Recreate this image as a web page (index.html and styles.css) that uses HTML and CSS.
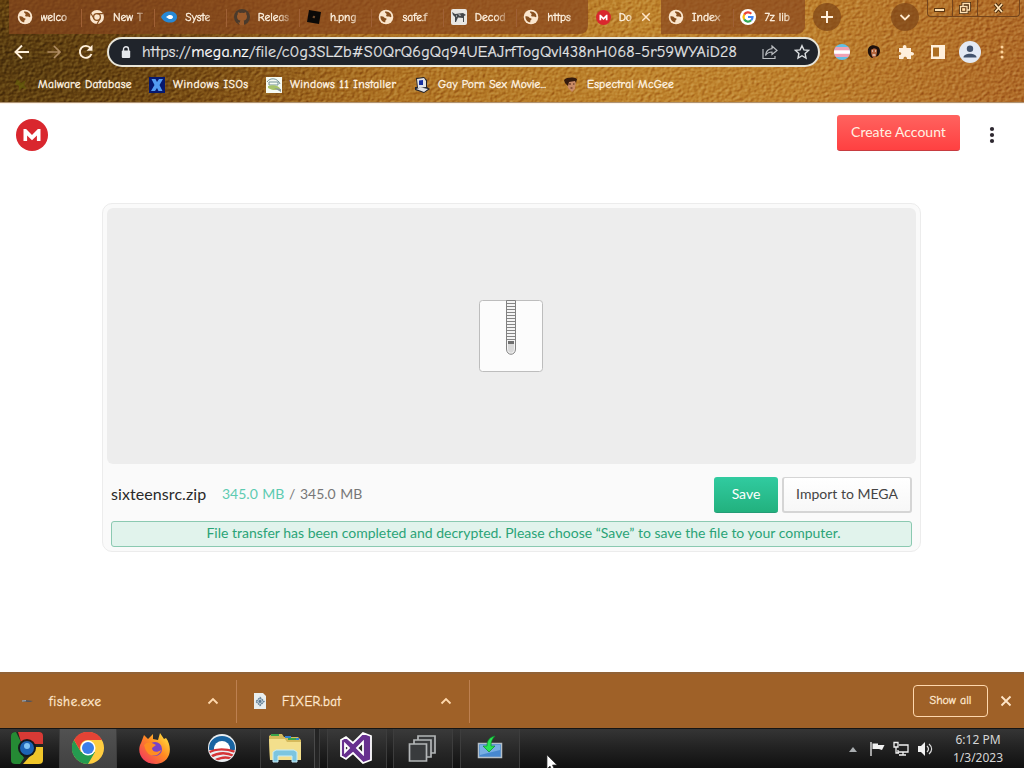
FILE: index.html
```html
<!DOCTYPE html>
<html lang="en">
<head>
  <meta charset="utf-8" />
  <title>MEGA - sixteensrc.zip</title>
  <link rel="stylesheet" href="styles.css">
</head>
<body>

  <!-- Shared icons -->
  <svg class="defs" width="0" height="0">
    <symbol id="globe" viewBox="0 0 16 16">
      <circle cx="8" cy="8" r="7.3" fill="#fbe6cd"/>
      <path d="M2.4 7.2c1.8 0 3 .2 3.8 1.2.9 1 2.4.4 2.4 1.6 0 1-1.300 1.100-1.300 2.100v1.200C4.300 13 2.300 10.500 2.400 7.200zM7 2.600c1.800-.5 4.200.3 5.400 2 .8 1.200 1 2.200.9 3.400-.9.500-1.500-.4-2.400-.5-1-.2-1.900.3-2.600-.5-.6-.8.600-1.300.3-2C8.300 4.200 6.700 4.100 7 2.600z" fill="#88501f"/>
    </symbol>
    <symbol id="up" viewBox="0 0 12 12"><path d="M1.500 8.500L6 4l4.500 4.500" fill="none" stroke="#ffd9ae" stroke-width="1.800"/></symbol>
    <symbol id="close" viewBox="0 0 12 12"><path d="M1.500 1.500l9 9M10.500 1.500l-9 9" fill="none" stroke="#ffe6c8" stroke-width="1.800"/></symbol>
    <symbol id="mega" viewBox="0 0 32 32">
      <circle cx="16" cy="16" r="16" fill="#d9272e"/>
      <path d="M7.500 22V10h2.600l5.900 5.900 5.900-5.900h2.600v12h-3.600v-5.600L16 21.200l-4.900-4.800V22z" fill="#fff"/>
    </symbol>
  </svg>

  <div class="browser">
    <div class="tabs">
      <div class="tab"><svg width="16" height="16"><use href="#globe"/></svg><span>welco</span></div>
      <div class="tab"><svg width="16" height="16" viewBox="0 0 16 16"><circle cx="8" cy="8" r="7" fill="#fbe6cd"/><circle cx="8" cy="8" r="3.400" fill="none" stroke="#88501f" stroke-width="1.300"/><path d="M8 4.600h6.200M5 9.700L2 4.500M11 9.700L8 15" stroke="#88501f" stroke-width="1.200"/></svg><span>New T</span></div>
      <div class="tab"><svg width="16" height="16" viewBox="0 0 16 16"><path d="M0 8c2-4 5-5.500 9-5.500 4 0 7 2 7 5.500s-3 5.500-7 5.500S2 12 0 8z" fill="#2789d6"/><path d="M5 8l3-2c3-.5 4 1 4 2s-1 2.500-4 2z" fill="#fff"/></svg><span>Syste</span></div>
      <div class="tab"><svg width="16" height="16" viewBox="0 0 16 16"><circle cx="8" cy="8" r="8" fill="#4a3a2c"/><path d="M6 16v-2.500c-2 .4-2.500-1-3-1.500M10 16v-3c0-.7 0-1-.5-1.500 2-.3 3.500-1 3.500-4 0-1-.3-1.700-.8-2.300.2-.6.100-1.400-.2-2-.8 0-1.500.4-2 .8a7 7 0 0 0-4 0c-.5-.4-1.200-.8-2-.8-.3.600-.4 1.400-.2 2C3.300 5.800 3 6.500 3 7.500c0 3 1.500 3.700 3.500 4-.5.500-.5 1-.5 1.500V16z" fill="#9a5a2a"/></svg><span>Releas</span></div>
      <div class="tab"><svg width="16" height="16" viewBox="0 0 16 16"><path d="M3 1l12 2-2 12L1 13z" fill="#0b0907"/><path d="M7 6.800l2.200.3-.4 2.200-2.200-.3z" fill="#6d4a2c"/></svg><span>h.png</span></div>
      <div class="tab"><svg width="16" height="16"><use href="#globe"/></svg><span>safe.f</span></div>
      <div class="tab"><svg width="16" height="16" viewBox="0 0 16 16"><rect width="16" height="16" rx="2" fill="#e9e7e3"/><path d="M1 3l3 2 8-1 3 2-2 1v6h-1V9l-5-.5L5 13H4V8L2 6z" fill="#45484b"/><path d="M7 5l3 1-1 1zM10 2h4v1zM5 6l1 1-1 1z" fill="#eee"/></svg><span>Decod</span></div>
      <div class="tab last"><svg width="16" height="16"><use href="#globe"/></svg><span>https</span></div>
      <div class="tab active"><svg width="15" height="15"><use href="#mega"/></svg><span>Do</span><svg class="x" width="10" height="10"><use href="#close"/></svg></div>
      <div class="tab"><svg width="16" height="16"><use href="#globe"/></svg><span>Index</span></div>
      <div class="tab last"><svg width="16" height="16" viewBox="0 0 16 16"><circle cx="8" cy="8" r="8" fill="#fff"/><g fill="none" stroke-width="2.200"><path d="M4.200 5.600A4.500 4.500 0 0 1 11.300 4.700" stroke="#ea4335"/><path d="M4.200 10.400a4.800 4.800 0 0 1 0-4.800" stroke="#fbbc05"/><path d="M11.200 11.300a4.500 4.500 0 0 1-7-.9" stroke="#34a853"/><path d="M8 8h4.500c0 1.500-.5 2.500-1.300 3.300" stroke="#4285f4"/></g></svg><span>7z lib</span></div>
      <div class="round plus"><svg width="14" height="14" viewBox="0 0 14 14"><path d="M7 1v12M1 7h12" stroke="#fff0dc" stroke-width="2"/></svg></div>
      <div class="round search"><svg width="12" height="12" viewBox="0 0 12 12"><path d="M1.500 4L6 8.500 10.500 4" fill="none" stroke="#ffe9cd" stroke-width="1.800"/></svg></div>
      <div class="controls">
        <div><svg class="min" width="12" height="12" viewBox="0 0 12 12"><rect x=".5" y="6.500" width="10" height="3" fill="#ffe2b5" stroke="#5a3510"/></svg></div>
        <div><svg width="12" height="12" viewBox="0 0 12 12"><g fill="none" stroke="#4d2d0c" stroke-width="3"><path d="M4 4V1.500h6.500V8H8"/><path d="M1.500 4.500H8V10.500H1.500z"/></g><g fill="none" stroke="#ffe2b5" stroke-width="1.300"><path d="M4 4V1.500h6.500V8H8"/><path d="M1.500 4.500H8V10.500H1.500zM4 7h1.500v1H4z"/></g></svg></div>
        <div><svg width="12" height="12" viewBox="0 0 12 12"><path d="M2 2l7 8M9 2l-7 8" stroke="#4d2d0c" stroke-width="3.800"/><path d="M2 2l7 8M9 2l-7 8" stroke="#ffe2b5" stroke-width="1.800"/></svg></div>
      </div>
    </div>

    <div class="toolbar">
      <svg width="16" height="16" viewBox="0 0 16 16"><path d="M15 8H2M8 1.500L1.500 8 8 14.500" fill="none" stroke="#fff0db" stroke-width="1.900"/></svg>
      <svg width="16" height="16" viewBox="0 0 16 16"><path d="M1.500 8h12M8 2l6 6-6 6" fill="none" stroke="#b08c62" stroke-width="1.700"/></svg>
      <svg width="16" height="16" viewBox="0 0 16 16"><path d="M13.500 10A6 6 0 1 1 12.500 4" fill="none" stroke="#fff0db" stroke-width="1.900"/><path d="M14.500.8v6H8.500z" fill="#fff0db"/></svg>
      <div class="omnibox">
        <svg width="10" height="13" viewBox="0 0 10 13"><rect x=".8" y="4.500" width="8.400" height="7.500" rx="1" fill="#e5e8ec"/><path d="M2.500 5V3.200a2.500 2.500 0 0 1 5 0V5" fill="none" stroke="#e5e8ec" stroke-width="1.400"/></svg>
        <span class="url">https://<b>mega.nz</b>/file/c0g3SLZb#S0QrQ6gQq94UEAJrfTogQvl438nH068-5r59WYAiD28</span>
        <svg class="share" width="16" height="16" viewBox="0 0 16 16"><path d="M1 5v9.500h12V12M10 2l5 4.500-5 4V8C7 8 5 9 3.500 11.500 4 7.500 6.500 5 10 4.700z" fill="none" stroke="#b9bcc0" stroke-width="1.200"/></svg>
        <svg width="16" height="16" viewBox="0 0 16 16"><path d="M8 1.700l1.900 4.200 4.600.5-3.400 3.100.9 4.500L8 11.700 4 14l.9-4.500-3.400-3.100 4.600-.5z" fill="none" stroke="#dcdfe2" stroke-width="1.400"/></svg>
      </div>
      <div class="extensions">
        <svg width="16" height="16" viewBox="0 0 16 16"><clipPath id="round"><circle cx="8" cy="8" r="8"/></clipPath><g clip-path="url(#round)"><rect width="16" height="16" fill="#62bfe5"/><rect y="3" width="16" height="10" fill="#f0a2b4"/><rect y="6.300" width="16" height="3.500" fill="#fff"/></g></svg>
        <svg width="16" height="16" viewBox="0 0 16 16"><path d="M2 8c-1-5 4-8 8-6 5 1 5 7 2 10l-6 2C3 12 2 10 2 8z" fill="#1d100c"/><path d="M5 6c2-2 5-2 6 0 0 4-1 8-3 8S5 10 5 6z" fill="#b5673e"/><path d="M6 7h1M9 7h1M6.500 11h3" stroke="#fff" stroke-width="1"/></svg>
        <svg width="16" height="16" viewBox="0 0 16 16"><path d="M1 4h4c-1-4 4-4 3.500 0H13v4c4-.5 4 4 0 3.500V15H9c.5-3-4-3-3.500 0H1v-4c3 .5 3-3.500 0-3z" fill="#fff0dc"/></svg>
        <svg width="16" height="16" viewBox="0 0 16 16"><path d="M1 1h14v14H1z" fill="#fff0dc"/><path d="M3 3.500h6v9H3z" fill="#ad6e22"/></svg>
        <svg width="22" height="22" viewBox="0 0 22 22"><circle cx="11" cy="11" r="11" fill="#e4eaf4"/><circle cx="11" cy="7.700" r="3.200" fill="#43536d"/><path d="M4.500 16.500c0-5 13-5 13 0z" fill="#43536d"/></svg>
        <svg width="6" height="16" viewBox="0 0 6 16"><g fill="#ffd49c"><circle cx="3" cy="3" r="1.500"/><circle cx="3" cy="8" r="1.500"/><circle cx="3" cy="13" r="1.500"/></g></svg>
      </div>
    </div>

    <div class="bookmarks">
      <div class="bookmark malware"><svg width="16" height="16" viewBox="0 0 16 16"><path d="M3 2l4 4 5-3-2 5 3 4-5-1-3 3V9L1 7z" fill="#66600b" opacity=".65"/></svg><span>Malware Database</span></div>
      <div class="bookmark isos"><svg width="16" height="16" viewBox="0 0 16 16"><rect width="16" height="16" fill="#06186e"/><path d="M2.500 2h4L8 5l2-3h4L10.500 8l3 6h-4L8 11l-2 3H2l3.500-6z" fill="#529bf0"/></svg><span>Windows ISOs</span></div>
      <div class="bookmark installer"><svg width="16" height="16" viewBox="0 0 16 16"><rect width="16" height="16" fill="#f6faf2"/><path d="M1 5c3-5 11-4 13 2M3 5h9v3H3z" fill="none" stroke="#759397"/><path d="M2 9c5-2 12 0 12 3-4 2-9 1-12-1z" fill="#a8c46b"/><path d="M8 11l7 1v3z" fill="#89979c"/></svg><span>Windows 11 Installer</span></div>
      <div class="bookmark movie"><svg width="16" height="16" viewBox="0 0 16 16"><path d="M2 1l8-1 3 3v7l3 2-6 4-9-3v-3h2z" fill="#22232c"/><path d="M3 2l7-1 2 3v6l-8 1zM2 12l5-1.500 7 1.500-4 3z" fill="#e3e4e6"/><path d="M5 3.500l4-.5v5H5z" fill="#1730a0"/></svg><span>Gay Porn Sex Movie...</span></div>
      <div class="bookmark mcgee"><svg width="16" height="16" viewBox="0 0 16 16"><path d="M4 4h9l-1 8-3 3-4-4z" fill="#c98a66"/><path d="M1 3c3-3 10-3 13-1l-1 4-1-2-6 1-1 4-3-3z" fill="#33190d"/><path d="M6 7h2M10 7h1.500M7.500 11h2" stroke="#4c2515"/></svg><span>Espectral McGee</span></div>
    </div>
  </div>

  <div class="page">
    <div class="top-bar">
      <svg width="32" height="32"><use href="#mega"/></svg>
      <div class="create">Create Account</div>
      <svg class="dots" width="6" height="18" viewBox="0 0 6 18"><g fill="#2d2730"><circle cx="3" cy="3" r="2.100"/><circle cx="3" cy="9" r="2.100"/><circle cx="3" cy="15" r="2.100"/></g></svg>
    </div>

    <div class="download">
      <div class="preview">
        <svg width="66" height="74" viewBox="0 0 66 74">
          <rect x="1.500" y="1.500" width="63" height="71" rx="3" fill="#fcfcfc" stroke="#bdbdbd"/>
          <path d="M28.500 1.500h9V50c0 7-9 7-9 0z" fill="#f4f4f4" stroke="#818181"/>
          <path d="M29 4.500h8M29 7.500h8M29 10.500h8M29 13.500h8M29 16.500h8M29 19.500h8M29 22.500h8M29 25.500h8M29 28.500h8M29 31.500h8M29 34.500h8M29 37.500h8M29 40.500h8" stroke="#858585"/>
          <path d="M30 42h6v3h-6z" fill="#6f6f6f"/><path d="M30 45h6v5c0 5-6 5-6 0z" fill="#d9d9d9"/>
        </svg>
      </div>
      <div class="file-row">
        <span class="name">sixteensrc.zip</span>
        <span class="size"><em>345.0 MB</em> / 345.0 MB</span>
        <div class="save">Save</div>
        <div class="import">Import to MEGA</div>
      </div>
      <div class="message">File transfer has been completed and decrypted. Please choose “Save” to save the file to your computer.</div>
    </div>
  </div>

  <div class="shelf">
    <div class="item first">
      <svg width="16" height="16" viewBox="0 0 16 16"><path d="M2 8l4-1 8 1-3 1-5-.3z" fill="#4b5360"/><path d="M3 8l4-.3" stroke="#a6b7c8"/></svg>
      <span>fishe.exe</span>
      <svg class="arrow" width="12" height="12"><use href="#up"/></svg>
    </div>
    <div class="item second">
      <svg width="16" height="16" viewBox="0 0 16 16"><path d="M2 0h9l3 3v13H2z" fill="#e9eeee"/><path d="M8 4.500l4 4-4 4-4-4z" fill="#bccbd5" stroke="#607d93" stroke-width="1.300" stroke-dasharray="1.800 .7"/><circle cx="8" cy="8.500" r="1.400" fill="#5a7890"/></svg>
      <span>FIXER.bat</span>
      <svg class="arrow" width="12" height="12"><use href="#up"/></svg>
    </div>
    <div class="show-all">Show all</div>
    <svg class="close" width="12" height="12"><use href="#close"/></svg>
  </div>

  <div class="taskbar">
    <div class="task start"><svg width="34" height="34" viewBox="0 0 34 34"><rect x="1" y="1" width="32" height="32" rx="4" fill="#202421"/><path d="M1 5q0-4 5-4l5 10-2 8 5 8-4 6H5q-4 0-4-4z" fill="#258a34"/><path d="M8 1h21q4 0 4 4v8H20L11 11z" fill="#d93a35"/><path d="M33 16v13q0 4-4 4H13l8-9 3-8z" fill="#f0c62a"/><circle cx="17" cy="17" r="9" fill="#15191e"/><circle cx="17" cy="17" r="7" fill="#1d64b5"/><circle cx="17" cy="15" r="3" fill="#82c5f5"/></svg></div>
    <div class="task chrome lit"><svg width="32" height="32" viewBox="0 0 32 32"><circle cx="16" cy="16" r="16" fill="#ffcd40"/><path d="M2 8a16 16 0 0 0 14 24l7-12H9z" fill="#259b50"/><path d="M2 8a16 16 0 0 1 28 0H16a8 8 0 0 0-7 12z" fill="#e54335"/><circle cx="16" cy="16" r="7.500" fill="#fff"/><circle cx="16" cy="16" r="6" fill="#3c7ee8"/></svg></div>
    <div class="task"><svg width="32" height="32" viewBox="0 0 32 32"><defs><linearGradient id="fox" x1="1" y1="0" x2="0" y2="1"><stop offset="0" stop-color="#fff044"/><stop offset=".45" stop-color="#ff8b22"/><stop offset="1" stop-color="#f02869"/></linearGradient></defs><path d="M2 11L5 3l4 4 5-5v5l5 1 2-7 4 6 2-1c7 9 5 25-10 26C3 32-3 20 2 11z" fill="url(#fox)"/><circle cx="16" cy="17" r="7" fill="#7943c7"/><path d="M5 13c3-3 5-3 8-2l4 2-4 3c0 4 5 5 9 2-1 6-10 8-14 2-2-2-2-5-3-7z" fill="#ff8d22"/></svg></div>
    <div class="task"><svg width="28" height="28" viewBox="0 0 28 28"><clipPath id="o"><circle cx="14" cy="14" r="13"/></clipPath><circle cx="14" cy="14" r="14" fill="#e9edf0"/><g clip-path="url(#o)"><path d="M0 16a14 14 0 0 1 28 0h-6a8 8 0 0 0-16 0z" fill="#1864a2"/><path d="M6 15a8 8 0 0 1 16 0z" fill="#fff"/><path d="M0 19c8-5 19-4 28-1M2 23c9-5 16-5 24-1M6 27c7-4 12-5 18-2" fill="none" stroke="#d53437" stroke-width="2.400"/></g></svg></div>
    <div class="task lit explorer"><svg width="34" height="30" viewBox="0 0 34 30"><path d="M1 3l3-2h10l2 3h14l3 3v20H2z" fill="#d5ba5c"/><path d="M3 2h8M20 6h9" stroke="#3ba34a" stroke-width="2"/><path d="M17 4h6M28 6h3" stroke="#3581ce" stroke-width="2"/><path d="M1 6h16l2 3h14v18H2z" fill="#f3df8c"/><path d="M5 29V19l3-2h18l3 2v10h-5v-6H10v6z" fill="#7cc5df" stroke="#c8ecf6"/></svg></div>
    <div class="task lit"><svg width="34" height="34" viewBox="0 0 34 34"><path d="M2 9l5-3 7 6L24 2l8 3v24l-8 3-10-10-7 6-5-3zM6 13v8l4-4zM24 11l-6 6 6 6z" fill="#67308f" fill-rule="evenodd" stroke="#fff" stroke-width="1.800"/></svg></div>
    <div class="task lit"><svg width="28" height="28" viewBox="0 0 28 28"><g fill="#393b3d" stroke="#b3b6b7" stroke-width="1.700"><path d="M10 2h17v17H10z"/><path d="M6 6h17v17H6z"/><path d="M1.500 10h17v17h-17z"/></g></svg></div>
    <div class="task lit installing"><svg width="26" height="26" viewBox="0 0 26 26"><path d="M1.500 8.500h23v14h-23z" fill="#4788cf" stroke="#b6c0c8" stroke-width="1.500"/><path d="M3 10h20v5L3 20z" fill="#78aee3"/><path d="M18 1c-5 1-8 4-8 10H6l6 6 6-6h-4c0-4 1-7 4-10z" fill="#28e553" stroke="#0d8a2b" stroke-width=".7"/></svg></div>
    <div class="tray">
      <svg width="8" height="6" viewBox="0 0 8 6"><path d="M0 6l4-5 4 5z" fill="#a9adb0"/></svg>
      <svg width="16" height="16" viewBox="0 0 16 16"><path d="M2 1v14" stroke="#eee" stroke-width="1.300"/><path d="M3.500 2.500H9V4h6.500L13 9l-3-1H3.500z" fill="#f2f2f2"/></svg>
      <svg width="16" height="16" viewBox="0 0 16 16"><g fill="none" stroke="#f1f1f1" stroke-width="1.300"><path d="M6 4h9v7H5V9M10 11v3M6 14h7M3 6v6h3M1 1.500h4V6H1z"/></g></svg>
      <svg width="16" height="16" viewBox="0 0 16 16"><path d="M1 5h3l4-4v14l-4-4H1z" fill="#f2f2f2"/><path d="M10 5c2 2 2 4 0 6M12 3c3.500 3 3.500 7 0 10" fill="none" stroke="#ddd" stroke-width="1.200"/></svg>
      <div class="clock">6:12 PM<br>1/3/2023</div>
    </div>
  </div>

  <svg class="cursor" width="12" height="18" viewBox="0 0 12 18"><path d="M1 0v14l3-3 2.500 6 2.500-1-2.500-6H11z" fill="#fff" stroke="#333" stroke-width=".7"/></svg>

</body>
</html>
```

FILE: styles.css
```css
* { box-sizing: border-box; }
html, body { height: 100%; }
body { margin: 0; width: 1024px; height: 768px; overflow: hidden; display: flex; flex-direction: column; position: relative; background: #fff; font-family: Lato, sans-serif; }
svg { display: block; flex: none; }
svg.defs { position: absolute; }

/* leather theme */
.browser {
  height: 103px; flex: none; color: #fff3e2; font-family: "Comic Sans MS", "Comic Neue", "Noto Sans", sans-serif; font-size: 12px;
  border-bottom: 1px solid #ad9478;
  background:
    url("data:image/svg+xml,%3Csvg xmlns='http://www.w3.org/2000/svg' width='1024' height='103'%3E%3Cfilter id='n' x='0' y='0' width='100%25' height='100%25' color-interpolation-filters='sRGB'%3E%3CfeTurbulence type='fractalNoise' baseFrequency='.26 .34' numOctaves='2' seed='8' result='t'/%3E%3CfeDiffuseLighting in='t' surfaceScale='.8' lighting-color='white'%3E%3CfeDistantLight azimuth='220' elevation='31'/%3E%3C/feDiffuseLighting%3E%3C/filter%3E%3Crect width='1024' height='103' filter='url(%23n)'/%3E%3C/svg%3E"),
    radial-gradient(ellipse 330px 120px at 0 60px, #4e350fcc, #4e350f00),
    linear-gradient(90deg, #70480f 0, #8c5716 220px, #ae7222 400px, #bd822b 640px, #bd802c 800px, #ae6926 1024px);
  background-blend-mode: soft-light, normal, normal;
}
.tabs { height: 34px; display: flex; padding-left: 9px; }
.tab { width: 72.4px; height: 34px; flex: none; display: flex; align-items: center; gap: 8px; padding-left: 7.500px; background: #87461eb0; position: relative; }
.tab span { width: 38px; white-space: nowrap; font-size: 11.500px; -webkit-text-stroke: .35px; -webkit-mask-image: linear-gradient(90deg, #000 50%, transparent 95%); }
.tab:not(.last):not(.active)::after { content: ""; position: absolute; right: -1px; top: 9px; width: 1px; height: 18px; background: #d69a67; }
.tab.last { border-radius: 0 0 8px 0; }
.tab.active { background: none; }
.tab.active span { width: 18px; }
.tab.active .x { margin-left: -4px; }
.round { width: 28px; height: 28px; margin-top: 3px; border-radius: 50%; background: #7d4517b8; display: flex; align-items: center; justify-content: center; }
.plus { margin-left: 8px; }
.search { margin-left: 50px; }
.controls { display: flex; height: 17px; margin-left: 8px; border: 1px solid #74451c; border-top: 0; border-radius: 0 0 4px 4px; }
.controls div { width: 25px; border-right: 1px solid #74451c; display: flex; justify-content: center; align-items: center; }
.controls div:last-child { width: 41px; border: 0; }

.toolbar { height: 35px; display: flex; align-items: center; padding-left: 14px; }
.toolbar > svg { margin-right: 16px; }
.toolbar > svg:nth-child(3) { margin-right: 13px; }
.omnibox { width: 713px; height: 30px; margin-top: 1px; border: 2px solid #e8e5d9; border-radius: 15px; background: #20242b; display: flex; align-items: center; padding: 0 8px 0 12px; }
.url { width: 597px; margin-left: 11px; font-size: 16px; letter-spacing: .18px; white-space: nowrap; color: #e2e3e5; -webkit-text-stroke: .2px; }
.url b { font-weight: 400; color: #fff; }
.share { margin-left: auto; margin-right: 16px; }
.extensions { display: flex; align-items: center; padding-left: 14px; gap: 16px; }
.extensions svg:nth-child(5) { margin-left: -3px; }
.extensions svg:nth-child(6) { margin-left: 2px; }

.bookmarks { height: 31px; display: flex; align-items: center; padding-left: 14px; }
.bookmark { display: flex; align-items: center; gap: 8px; white-space: nowrap; font-size: 11.500px; letter-spacing: .28px; -webkit-text-stroke: .35px; }
.malware { width: 135px; }
.isos { width: 117px; letter-spacing: .5px; }
.installer { width: 148px; letter-spacing: .35px; }
.movie { width: 149px; letter-spacing: .13px; }
.mcgee { letter-spacing: .2px; }

/* mega.nz */
.page { height: 569px; flex: none; border-top: 1px solid #fff4e6; }
.top-bar { height: 62px; display: flex; align-items: center; padding: 0 29px 0 16px; }
.create { width: 123px; height: 36px; margin: -4px 29px 0 auto; border-radius: 3px; border-bottom: 1px solid #c73b40; background: linear-gradient(#ff635f, #ff4041); color: #fff1e2; font-size: 14px; line-height: 34px; text-align: center; }
.download { width: 819px; height: 349px; margin: 37px 0 0 102px; padding: 4px 4px 3px; border: 1px solid #ececec; border-radius: 10px; background: #fafafa; }
.preview { height: 256px; padding: 0 1px 1px 0; border-radius: 6px; background: #ededed; display: flex; align-items: center; justify-content: center; }
.file-row { height: 36px; margin: 13px 4px 0; display: flex; align-items: center; color: #777; font-size: 14px; }
.name { width: 111px; margin-top: -3px; color: #292929; font-size: 16px; letter-spacing: .08px; }
.size { margin-top: -3px; word-spacing: 1px; }
.size em { font-style: normal; color: #5dcbb1; }
.save { width: 64px; height: 36px; margin-left: auto; margin-right: 4px; border-radius: 3px; background: linear-gradient(#31cba0, #22b17e); border-bottom: 1px solid #249c76; color: #fff; line-height: 34px; text-align: center; }
.import { width: 130px; height: 36px; border: 1px solid #d5d5d5; border-width: 1px 2px 2px; border-radius: 3px; background: linear-gradient(#fff, #f7f7f7); color: #444; line-height: 32px; text-align: center; }
.message { height: 26px; margin: 8px 4px 0; padding-left: 24px; border: 1px solid #8bc9b1; border-radius: 3px; background: #e1f3ec; color: #2ba377; font-size: 14px; line-height: 22px; text-align: center; white-space: nowrap; }

.shelf { height: 56px; flex: none; display: flex; align-items: center; border-top: 2px solid #916236; background: #9f6128; color: #ffe8ce; font-family: "Comic Sans MS", "Comic Neue", "Noto Sans", sans-serif; font-size: 13px; -webkit-text-stroke: .3px; }
.item { height: 43px; display: flex; align-items: center; border-right: 1px solid #bd8050; }
.item span { margin-left: 14px; letter-spacing: .3px; }
.item.first { width: 237px; padding-left: 19px; }
.item.first span { letter-spacing: .7px; }
.item.second { width: 233px; padding-left: 15px; }
.item .arrow { margin-left: auto; margin-right: 17px; }
.show-all { width: 75px; height: 32px; margin-left: auto; border: 1px solid #ffd8ad; border-radius: 4px; font-size: 12px; line-height: 28px; text-align: center; }
.close { margin: 0 12px; }

.taskbar { height: 40px; flex: none; display: flex; border-top: 1px solid #151515; background: linear-gradient(#353535, #222 48%, #101010); }
.task { width: 67px; padding-right: 2px; display: flex; align-items: center; justify-content: center; }
.task svg { margin-top: -2px; }
.task.lit { width: 60px; margin-right: 6.500px; border: 1px solid #3d3d3d; border-width: 0 1px; background: linear-gradient(#3a3a3a, #262626 60%, #1b1b1b); }
.task.start { width: 59px; padding-right: 5px; }
.task.chrome { width: 58px; margin-right: 5px; padding-right: 0; background: linear-gradient(#525252, #414141); }
.task.explorer { margin-left: 4px; padding-right: 10px; box-shadow: inset -4px 0 #242424, inset -5px 0 #4a4a4a; }
.task.installing { padding-right: 0; }
.tray { margin-left: auto; padding-right: 19px; display: flex; align-items: center; gap: 8px; color: #d6d6d6; font-family: "Noto Sans", sans-serif; }
.tray svg:first-child { margin-right: 4px; }
.clock { width: 54px; margin-left: 10px; font-size: 12px; line-height: 18px; text-align: center; white-space: nowrap; }
.cursor { position: absolute; left: 546px; top: 755px; }
```
